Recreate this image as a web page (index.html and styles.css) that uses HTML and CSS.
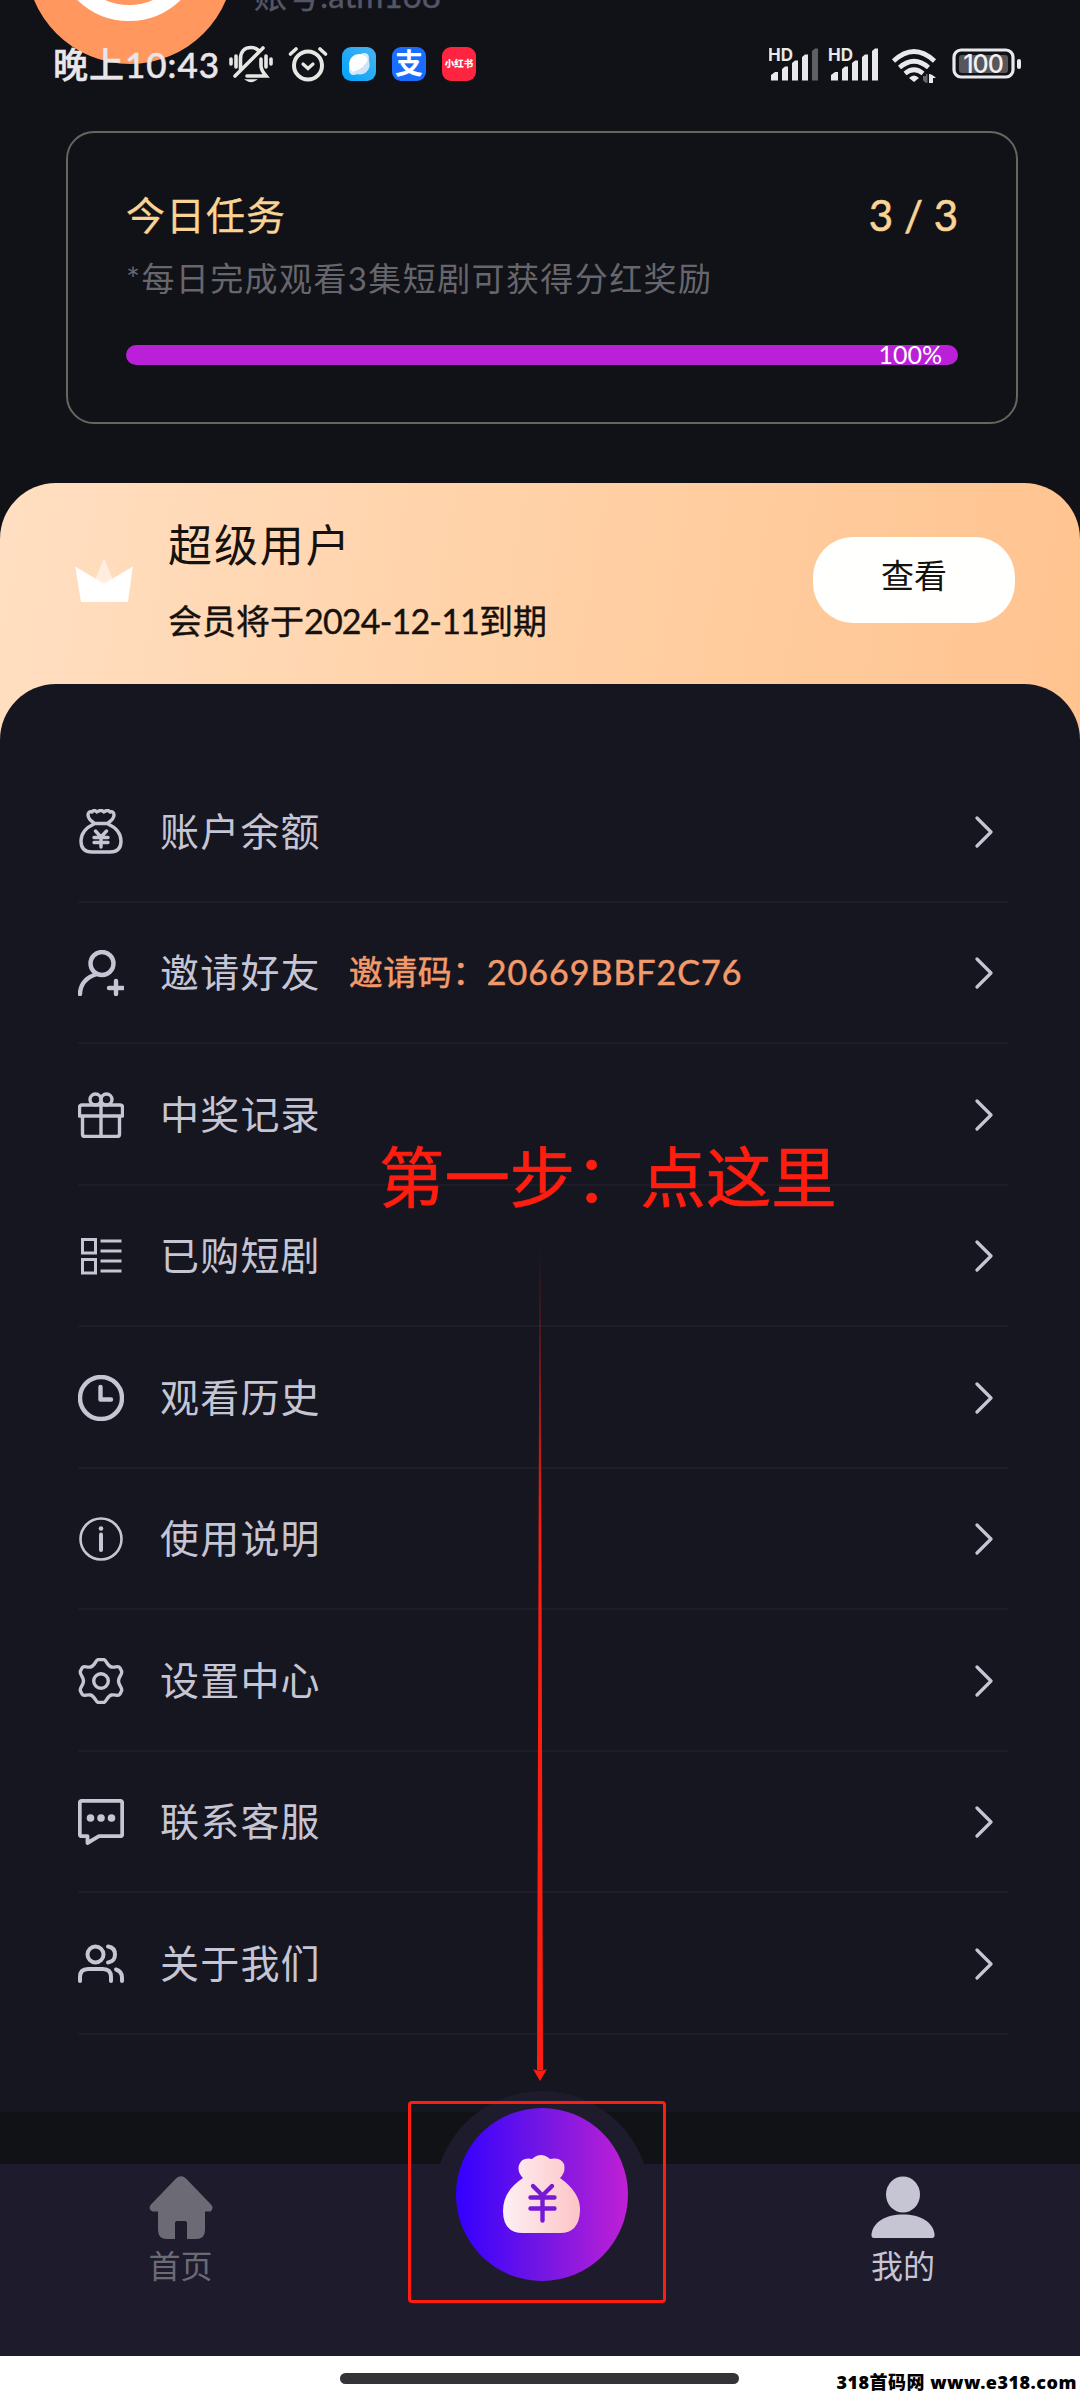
FILE: index.html
```html
<!DOCTYPE html>
<html lang="zh-CN">
<head>
<meta charset="utf-8">
<title>我的</title>
<link rel="stylesheet" href="styles.css">
</head>
<body>
<svg width="0" height="0" class="defs">
  <defs>
    <symbol id="chev" viewBox="0 0 18 32"><path d="M2 2 16 16 2 30" fill="none" stroke="#c6c5d3" stroke-width="3.200" stroke-linecap="round" stroke-linejoin="round"/></symbol>
    <linearGradient id="bag" x1="0" x2="1"><stop offset="0" stop-color="#fdf0f4"/><stop offset="1" stop-color="#fdc4c6"/></linearGradient>
    <linearGradient id="sky" x1="0" y1="1" x2="1" y2="0"><stop offset="0" stop-color="#00a2ff"/><stop offset="1" stop-color="#4bb4ee"/></linearGradient>
    <linearGradient id="red" x1="0" y1="0" x2="0" y2="1"><stop offset="0" stop-color="#ff1d10" stop-opacity="0"/><stop offset=".35" stop-color="#ff1d10"/></linearGradient>
  </defs>
</svg>
<div class="screen">
  <header class="top">
    <div class="avatar"><span></span></div>
    <div class="account">账号:atm168</div>
    <div class="status">
      <span class="time">晚上10:43</span>
      <svg class="i-bell" width="44" height="38" viewBox="0 0 44 38" fill="none" stroke="#e6e6e3" stroke-width="3.600" stroke-linecap="round">
        <path d="M2 14v5M7 11v11M37 11v11M42 14v5"/>
        <path d="M11.500 24V14C11.500 6 16 2.500 22 2.500q4 0 7 2.500M32 14v7q0 4 5 10H18M6 31 34 3"/>
        <path d="M17.500 35h9q-4.500 3-9 0Z" fill="#e6e6e3" stroke-width="1.500"/>
      </svg>
      <svg class="i-alarm" width="40" height="36" viewBox="0 0 40 36" fill="none" stroke="#e6e6e3" stroke-width="4" stroke-linecap="round">
        <circle cx="20" cy="19.500" r="14"/><path d="m15 18 5 4.500 5-4.500" stroke-width="3.200"/><path d="M2.500 8 8 3M37.500 8 32 3" stroke-width="3.600"/>
      </svg>
      <svg class="i-app" width="34" height="34" viewBox="0 0 34 34"><rect width="34" height="34" rx="9" fill="url(#sky)"/><ellipse cx="17" cy="17" rx="13" ry="7" transform="rotate(-50 17 17)" fill="#d4ecfb"/><circle cx="17" cy="17" r="10" fill="#fff"/><path d="M11 25Q23 21 26 12a10 10 0 0 1-15 13Z" fill="#cfe4fa"/></svg>
      <span class="app blue">支</span>
      <span class="app redapp">小红书</span>
      <span class="grow"></span>
      <svg class="i-net" width="254" height="38" viewBox="0 0 254 38">
        <g class="hd"><text x="-1" y="16">HD</text><text x="59" y="16">HD</text></g>
        <g fill="#e9e9ec">
          <path d="M2 35.500V30l4-3h3v8.500ZM13 35.500V24l3-2.500h3v14ZM23 35.500V18l3-2.500h3v20ZM33 35.500V12l3-2.500h3v26Z"/>
          <path d="M43 35.500V6l3-2.500h3v32Z" fill="#5f6064"/>
          <path d="M62 35.500V30l4-3h3v8.500ZM73 35.500V24l3-2.500h3v14ZM83 35.500V18l3-2.500h3v20ZM93 35.500V12l3-2.500h3v26ZM103 35.500V6l3-2.500h3v32Z"/>
          <path d="m145 37-5-4q5-5 10 0Z"/>
        </g>
        <g fill="none" stroke="#e9e9ec" stroke-width="4.600"><path d="M124.500 16Q145 -3 165.500 16M130.500 22.500q14.500-12.500 29 0M136 28.500q9-7.500 18 0"/></g>
        <path d="M154 31h3v-2h1.500v9q-3 0-4.500-3Z" fill="#666"/><path d="M160 38v-9q3 0 7 4h-3v5Z" fill="#e9e9ec"/>
        <rect x="185" y="5" width="59" height="27" rx="7" fill="none" stroke="#e9e9ec" stroke-width="3.200"/>
        <rect x="190" y="10" width="49" height="18" rx="3" fill="#56565b"/>
        <rect x="248" y="14" width="4" height="10" rx="2" fill="#e9e9ec"/>
        <text x="214" y="28" text-anchor="middle" class="bat">100</text>
      </svg>
    </div>
  </header>

  <section class="task">
    <div class="task-head"><span>今日任务</span><span class="count">3 / 3</span></div>
    <p>*每日完成观看3集短剧可获得分红奖励</p>
    <div class="bar"><span>100%</span></div>
  </section>

  <section class="vip">
    <svg class="crown" width="58" height="46" viewBox="0 0 60 48"><path d="m30 1 13 32H17Z" fill="#ffeedf"/><path d="m0 10 30 18 30-18-5 37H6Z" fill="#fff"/></svg>
    <div class="vip-text"><h1>超级用户</h1><p>会员将于<b>2024-12-11</b>到期</p></div>
    <button>查看</button>
  </section>

  <main class="menu">
    <div class="row"><svg class="ic purse" viewBox="0 0 46 46"><path d="M16 14q-6-4-6-8 0-4 4-3 2-3 5 0 4-3 7 0 4-3 6 0 4-1 4 3t-6 8M15 14.500h16M16 15Q3 21 3 32q0 11 11 11h18q11 0 11-11 0-11-13-17M17.500 22l5.500 6 5.500-6M16 28.500h14M16 33.500h14M23 28.500v9.500"/></svg><span>账户余额</span><svg class="chev"><use href="#chev"/></svg></div>
    <div class="row"><svg class="ic bold" viewBox="0 0 46 46"><circle cx="24" cy="13.500" r="11.500"/><path d="M19 24Q2.500 29 2 44M31 38h14M38 31v13"/></svg><span>邀请好友</span><em>邀请码：<b>20669BBF2C76</b></em><svg class="chev"><use href="#chev"/></svg></div>
    <div class="row"><svg class="ic gift" viewBox="0 0 46 46"><path d="M4 13h38q2.500 0 2.500 2.500V24h-43v-8.500Q1.500 13 4 13ZM4.500 24v18q0 2.500 2.500 2.500h32q2.500 0 2.500-2.500V24M23 13v31"/><circle cx="17.500" cy="7.500" r="5.500"/><circle cx="28.500" cy="7.500" r="5.500"/></svg><span>中奖记录</span><svg class="chev"><use href="#chev"/></svg></div>
    <div class="row"><svg class="ic sq" viewBox="0 0 46 46"><path d="M4.500 6.500h13V20h-13ZM4.500 26.500h13V40h-13ZM22.500 8h21M22.500 18h21M22.500 28h21M22.500 38h21"/></svg><span>已购短剧</span><svg class="chev"><use href="#chev"/></svg></div>
    <div class="row"><svg class="ic bold" viewBox="0 0 46 46"><circle cx="23" cy="23" r="21"/><path d="M22.500 12v12.500H33"/></svg><span>观看历史</span><svg class="chev"><use href="#chev"/></svg></div>
    <div class="row"><svg class="ic thin" viewBox="0 0 46 46"><circle cx="23" cy="23" r="20.500"/><path d="M23 18.500V34" stroke-width="4"/><circle cx="23" cy="12.500" r="2.300" fill="#c6c5d3" stroke="none"/></svg><span>使用说明</span><svg class="chev"><use href="#chev"/></svg></div>
    <div class="row"><svg class="ic gear" viewBox="0 0 46 46"><path d="M20.500 1.500h5c3 0 3.500 6.500 8 7.500 4 .800 7-2 8.500 1l1.500 3c1.500 3-3 5.500-3 10s4.500 7 3 10l-1.500 3c-1.500 3-4.500.200-8.500 1-4.500 1-5 7.500-8 7.500h-5c-3 0-3.500-6.500-8-7.500-4-.800-7 2-8.500-1l-1.500-3c-1.500-3 3-5.500 3-10s-4.500-7-3-10L4 10c1.500-3 4.500-.200 8.500-1 4.500-1 5-7.500 8-7.500Z"/><circle cx="23" cy="23" r="7.300"/></svg><span>设置中心</span><svg class="chev"><use href="#chev"/></svg></div>
    <div class="row"><svg class="ic chat" viewBox="0 0 46 46"><path d="M4 1.800h38q2.200 0 2.200 2.200v31q0 2.200-2.200 2.200H21L9.500 44v-6.800H4Q1.800 37.200 1.800 35V4Q1.800 1.800 4 1.800Z"/><g fill="#c6c5d3" stroke="none"><circle cx="12.500" cy="19" r="3.800"/><circle cx="23" cy="19" r="3.800"/><circle cx="33.500" cy="19" r="3.800"/></g></svg><span>联系客服</span><svg class="chev"><use href="#chev"/></svg></div>
    <div class="row"><svg class="ic grp" viewBox="0 0 46 46"><circle cx="17.500" cy="13.500" r="8"/><path d="M2 40v-4q0-8 8-8h15q8 0 8 8v4M30 5.500q7 1 7 8t-7 8M38 28.500q6 2 6 8V40"/></svg><span>关于我们</span><svg class="chev"><use href="#chev"/></svg></div>
  </main>

  <div class="gap"></div>
  <nav class="nav">
    <div class="tab off"><svg width="64" height="64" viewBox="0 0 64 64"><path d="M27 2.500q5-4.500 10 0L62.500 29q2.500 3.500-1 6.500H56V54q0 9-9 9h-9V47q0-2-2-2h-8q-2 0-2 2v16h-8q-9 0-9-9V35.500H3.500q-4.500-2-2-6.500Z" fill="#6b6a75"/></svg><span>首页</span></div>
    <div class="center"><div class="coin"><svg width="80" height="80" viewBox="0 0 80 80"><path d="M21 23q-6-6-4-13 3-8 13-6 9-8 18 0 10-2 14 5 2 8-4 14 21 15 20 33-1 22-20 22H21Q1 78 1 56 1 36 21 23Z" fill="url(#bag)"/><path d="m31 31 9.500 9.500L50 31M28.500 42.500h24M28.500 53.500h24M40.500 41v24.500" fill="none" stroke="#7718d6" stroke-width="4.400" stroke-linecap="round"/></svg></div></div>
    <div class="tab"><svg width="64" height="64" viewBox="0 0 64 64"><ellipse cx="32" cy="18.500" rx="17" ry="18" fill="#c6c5d3"/><path d="M3 62q-3 0-2.500-4C2 46 15 38.500 32 38.500S62 46 63.500 58q.500 4-2.500 4Z" fill="#c6c5d3"/></svg><span>我的</span></div>
  </nav>
  <footer class="home"><i></i><span class="mark">318首码网 www.e318.com</span></footer>

  <div class="note">第一步：点这里</div>
  <svg class="arrow" width="16" height="840" viewBox="0 0 16 840"><path d="M7.500 0h1L11 829H5Z" fill="url(#red)"/><path d="M1 828q7 3 14 0L8 840Z" fill="#ff1d10"/></svg>
  <div class="frame"></div>
</div>
</body>
</html>
```
FILE: styles.css
```css
* { box-sizing: border-box; margin: 0; padding: 0; }
body { width: 1080px; height: 2400px; background: #111217; font-family: Lato, "Noto Sans CJK SC", sans-serif; color: #c6c5d3; overflow: hidden; }
.defs { display: block; }
.screen { position: relative; width: 1080px; height: 2400px; display: flex; flex-direction: column; overflow: hidden; background: #111217; }
svg { flex: none; }

.top { position: relative; height: 131px; flex: none; }
.avatar { position: absolute; left: 26px; top: -144px; width: 208px; height: 208px; border-radius: 50%; background: #ff975f; overflow: hidden; }
.avatar span { position: absolute; left: 29px; top: 17px; width: 148px; height: 148px; border-radius: 50%; border: 16px solid #fff; }
.account { position: absolute; left: 254px; top: -27px; font-size: 33px; line-height: 44px; color: #545668; white-space: nowrap; -webkit-text-stroke: .4px; }
.status { position: absolute; inset: 44px 0 auto 0; height: 40px; display: flex; align-items: center; padding: 0 57px 0 53px; }
.time { width: 170px; font-size: 35px; font-weight: 500; line-height: 40px; color: #e8e6ea; letter-spacing: 1px; white-space: nowrap; -webkit-text-stroke: .5px; }
.i-bell { margin-left: 6px; }
.i-alarm { margin-left: 15px; }
.i-app { margin-left: 14px; }
.app { width: 34px; height: 34px; margin-left: 16px; border-radius: 9px; color: #fff; text-align: center; line-height: 32px; font-weight: 700; white-space: nowrap; }
.blue { background: #1a6dff; font-size: 28px; }
.redapp { background: #ff2440; font-size: 9.500px; font-weight: 900; line-height: 34px; }
.grow { flex: 1; }
.hd text { font: 700 17px Inter, sans-serif; fill: #e9e9ec; }
.bat { font: 500 25px Inter, sans-serif; fill: #f0f0f2; letter-spacing: -1px; }

.task { width: 952px; height: 293px; flex: none; margin-left: 66px; border: 2px solid #66665e; border-radius: 28px; padding: 57px 58px 0 58px; }
.task-head { display: flex; justify-content: space-between; height: 50px; line-height: 50px; font-size: 39px; letter-spacing: 1px; color: #fad494; -webkit-text-stroke: .3px; }
.count { font-size: 42px; letter-spacing: 0; -webkit-text-stroke: .6px; }
.task p { margin-top: 16px; font-size: 33px; letter-spacing: 1.400px; line-height: 44px; color: #66666c; white-space: nowrap; }
.bar { margin-top: 45px; height: 20px; border-radius: 10px; background: #b920d8; display: flex; justify-content: flex-end; padding-right: 16px; }
.bar span { font-size: 25px; line-height: 19px; color: #fff; }

.vip { height: 257px; flex: none; margin-top: 59px; border-radius: 56px 56px 0 0; background: linear-gradient(100deg, #ffdfc2, #ffd2a8 45%, #ffc38f); display: flex; align-items: flex-start; padding: 0 65px 0 75px; }
.crown { margin-top: 74px; }
.vip-text { flex: 1; margin-left: 35px; color: #15110e; }
.vip h1 { margin-top: 32px; font-size: 44px; font-weight: 400; letter-spacing: 1.900px; line-height: 60px; }
.vip p { margin-top: 21px; font-size: 34px; line-height: 50px; -webkit-text-stroke: .4px; }
.vip p b { font-weight: 400; letter-spacing: -.8px; }
.vip button { width: 202px; height: 86px; margin-top: 54px; padding-bottom: 11px; border: 0; border-radius: 40px; background: #fffffe; color: #15110e; font: 33px/1 "Noto Sans CJK SC", sans-serif; }

.menu { height: 1428px; flex: none; margin-top: -56px; padding: 77px 72px 0 78px; border-radius: 56px 56px 0 0; background: #161620; }
.row { height: 141.500px; display: flex; align-items: center; border-bottom: 2px solid #1d1d29; }
.ic { width: 46px; height: 46px; margin-top: 2px; fill: none; stroke: #c6c5d3; stroke-width: 3; stroke-linecap: round; stroke-linejoin: round; }
.bold { stroke-width: 4.400; }
.purse, .gift, .gear { stroke-width: 3.400; }
.grp { stroke-width: 4; }
.chat { stroke-width: 3.800; }
.thin { stroke-width: 2.600; }
.sq { stroke-linecap: butt; stroke-linejoin: miter; }
.row span { margin-left: 36px; font-size: 39px; letter-spacing: 1.200px; line-height: 50px; }
.row em { margin-left: 28px; font-style: normal; font-size: 34px; letter-spacing: .5px; line-height: 50px; color: #f39a6b; white-space: nowrap; -webkit-text-stroke: .5px; }
.row b { font-weight: 400; letter-spacing: 1px; }
.chev { width: 18px; height: 32px; margin-top: 2px; margin-left: auto; margin-right: 15px; }

.gap { height: 52px; flex: none; background: #111216; }
.nav { height: 192px; flex: none; display: grid; grid-template-columns: 361px 1fr 354px; background: #1d1b2c; }
.tab { display: flex; flex-direction: column; align-items: center; padding-top: 12px; }
.tab span { margin-top: 4px; font-size: 32px; line-height: 44px; }
.off { color: #6b6a75; }
.center { position: relative; }
.center::before { content: ""; position: absolute; left: 73px; top: -73px; width: 216px; height: 216px; border-radius: 50%; background: #1d1b2c; }
.coin { position: absolute; left: 95px; top: -56px; width: 172px; height: 173px; border-radius: 50%; background: linear-gradient(90deg, #3300ff, #7416e4 50%, #c020d4); display: flex; align-items: center; justify-content: center; }
.home { position: relative; height: 44px; flex: none; background: #fff; }
.home i { position: absolute; left: 340px; top: 17px; width: 399px; height: 11px; border-radius: 6px; background: #343338; }
.mark { position: absolute; right: 3px; top: 13px; font: 900 18px/26px "Noto Sans", "Noto Sans CJK SC", sans-serif; letter-spacing: .5px; color: #000; white-space: nowrap; }

.note { position: absolute; left: 379px; top: 1132px; font-size: 65.400px; line-height: 90px; color: #ff1d10; white-space: nowrap; -webkit-text-stroke: .7px; }
.arrow { position: absolute; left: 532px; top: 1241px; }
.frame { position: absolute; left: 408px; top: 2101px; width: 258px; height: 202px; border: 3px solid #ff1d10; border-radius: 4px; }
```
